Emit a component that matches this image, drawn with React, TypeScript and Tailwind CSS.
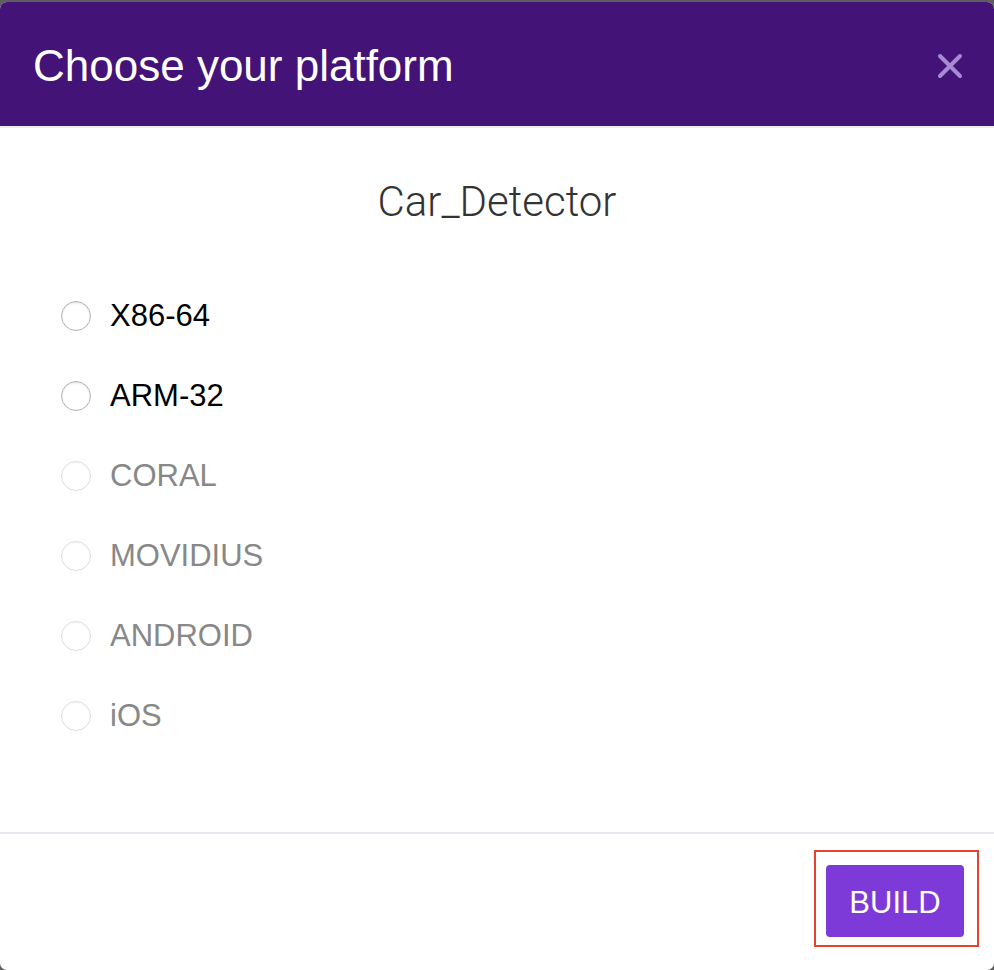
import React from "react";

const items = [
  { label: "X86-64", enabled: true },
  { label: "ARM-32", enabled: true },
  { label: "CORAL", enabled: false },
  { label: "MOVIDIUS", enabled: false },
  { label: "ANDROID", enabled: false },
  { label: "iOS", enabled: false },
];

export default function App() {
  return (
    <div className="h-[970px] w-[994px] bg-[#5e5e5e] pt-[2px] overflow-hidden" style={{ fontFamily: '"Liberation Sans", Arial, sans-serif' }}>
      <div className="flex h-[968px] flex-col overflow-hidden rounded-[7px] bg-white">
        <div className="flex h-[124px] shrink-0 items-center justify-between bg-[#431378] pl-[33px] pr-[31px]">
          <h1 className="pt-[4px] text-[44px] leading-none text-white">Choose your platform</h1>
          <svg width="26" height="26" viewBox="0 0 26 26" className="mt-[3px]">
            <path d="M3 3 L23 23 M23 3 L3 23" stroke="#a68ad2" strokeWidth="4" strokeLinecap="round" />
          </svg>
        </div>
        <div className="h-[2px] shrink-0 bg-[#ebebf1]" />
        <div className="flex flex-1 flex-col pt-[50px]">
          <div
            className="text-center text-[42px] font-light leading-[48px] text-[#333333]"
            style={{ fontFamily: 'Roboto, "Liberation Sans", Arial, sans-serif' }}
          >
            Car_Detector
          </div>
          <div className="mt-[50px] flex flex-col pl-[61px]">
            {items.map((it) => (
              <div key={it.label} className="flex h-[80px] items-center">
                <span
                  className={
                    it.enabled
                      ? "h-[30px] w-[30px] rounded-full border border-[#b3b3b3] bg-white shadow-[inset_0_1px_2px_rgba(0,0,0,0.12)]"
                      : "h-[30px] w-[30px] rounded-full border border-[#dedede] bg-white shadow-[inset_0_1px_2px_rgba(0,0,0,0.04)]"
                  }
                />
                <span
                  className={
                    it.enabled
                      ? "ml-[19px] -mt-[2px] text-[31px] leading-none text-black"
                      : "ml-[19px] -mt-[2px] text-[31px] leading-none text-[#888888]"
                  }
                >
                  {it.label}
                </span>
              </div>
            ))}
          </div>
        </div>
        <div className="flex h-[138px] shrink-0 justify-end border-t-2 border-[#e8e7ee] pr-[15px] pt-[16px]">
          <div className="h-[97px] border-2 border-[#e5432d] pb-[7px] pl-[10px] pr-[13px] pt-[13px]">
            <button className="flex h-[72px] w-[138px] items-center justify-center rounded-[4px] bg-[#7e3ad8] pt-[4px] text-[31px] text-white">
              BUILD
            </button>
          </div>
        </div>
      </div>
    </div>
  );
}
